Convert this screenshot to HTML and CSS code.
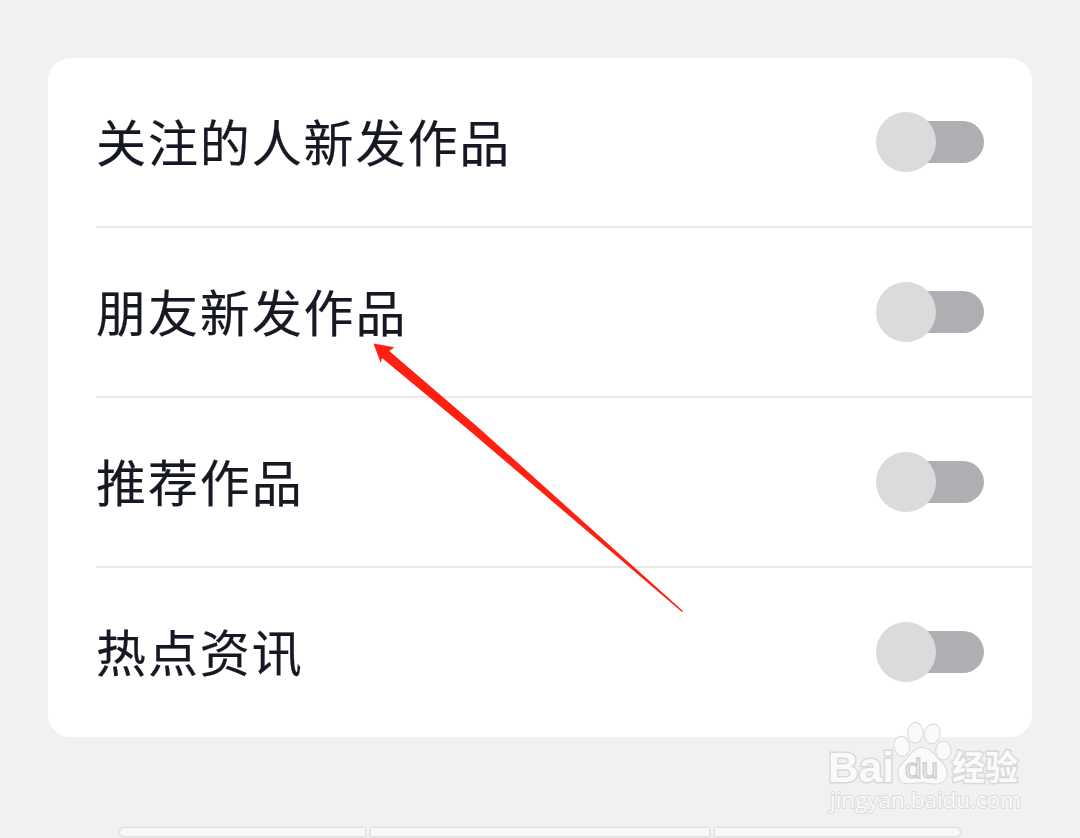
FILE: index.html
```html
<!DOCTYPE html>
<html lang="zh-CN">
<head>
    <meta charset="UTF-8">
    <meta name="viewport" content="width=device-width, initial-scale=1.0">
    <title>通知设置</title>
    <link rel="stylesheet" href="styles.css">
</head>
<body>
    <div class="settings">
        <div class="row">
            <span class="label">关注的人新发作品</span>
            <span class="switch"><span class="knob"></span></span>
        </div>
        <div class="row">
            <span class="label">朋友新发作品</span>
            <span class="switch"><span class="knob"></span></span>
        </div>
        <div class="row">
            <span class="label">推荐作品</span>
            <span class="switch"><span class="knob"></span></span>
        </div>
        <div class="row">
            <span class="label">热点资讯</span>
            <span class="switch"><span class="knob"></span></span>
        </div>
    </div>

    <div class="bars">
        <span class="bar bar-first"></span>
        <span class="bar bar-middle"></span>
        <span class="bar bar-last"></span>
    </div>

    <!-- Pointer to the second row -->
    <svg class="arrow" width="310" height="270" viewBox="373 343 310 270">
        <polygon points="373.5,343.5 394.3,347.3 389.3,350.9 480,429 683,611 682,612 467.5,429 382,357.9 380.8,363" fill="#ff2012"/>
    </svg>

    <!-- Watermark -->
    <svg class="watermark" width="210" height="100" viewBox="820 716 210 100">
        <g class="paw">
            <ellipse cx="901.7" cy="746.3" rx="7.3" ry="9.5" transform="rotate(-8 901.7 746.3)"/>
            <ellipse cx="915.4" cy="732.8" rx="7.2" ry="9.8"/>
            <ellipse cx="932.3" cy="733.8" rx="7.3" ry="9.5" transform="rotate(14 932.3 733.8)"/>
            <ellipse cx="943.4" cy="750.6" rx="7.2" ry="9"/>
            <path d="M922 748C930 748 934 755 939 760C945 765 948 771 946 777C944 784 936 784 930 783C924 782 919 782 913 783C906 784 900 783 899 776C897 769 901 765 906 760C911 755 914 748 922 748Z"/>
        </g>
        <g class="brand">
            <text x="828" y="782" font-size="43" textLength="66" lengthAdjust="spacingAndGlyphs">Bai</text>
            <text class="cjk" x="952" y="780" font-size="34" textLength="66" lengthAdjust="spacingAndGlyphs">经验</text>
        </g>
        <text class="du" x="905" y="778" font-size="28" textLength="33" lengthAdjust="spacingAndGlyphs">du</text>
        <text class="url" x="830" y="808" font-size="22" textLength="191" lengthAdjust="spacingAndGlyphs">jingyan.baidu.com</text>
    </svg>
</body>
</html>
```
FILE: styles.css
```css
* {
    box-sizing: border-box;
}
body {
    margin: 0;
    padding: 58px 48px 0;
    height: 838px;
    overflow: hidden;
    position: relative;
    background: #f1f1f1;
    font-family: "Noto Sans CJK SC", sans-serif;
}
.settings {
    height: 679px;
    background: #fff;
    border-radius: 22px;
    padding-left: 48px;
    overflow: hidden;
}
.row {
    height: 170px;
    display: flex;
    align-items: center;
    justify-content: space-between;
    padding-right: 48px;
    border-bottom: 2px solid #e8e8e9;
}
.row:last-child {
    border-bottom: none;
    padding-bottom: 2px;
}
.label {
    font-size: 50px;
    letter-spacing: 1.9px;
    line-height: 76px;
    padding-bottom: 4px;
    color: #161823;
    -webkit-text-stroke: 0.2px #161823;
}
.switch {
    width: 108px;
    height: 42px;
    border-radius: 21px;
    background: linear-gradient(to right, transparent 30px, #afafb3 30px);
    display: flex;
    align-items: center;
}
.knob {
    width: 60px;
    height: 60px;
    flex: none;
    border-radius: 50%;
    background: #dbdbdc;
}
.bars {
    display: flex;
    gap: 4px;
    margin-top: 90px;
    padding-left: 71px;
}
.bar {
    height: 10px;
    background: #f8f8f8;
    border: 1px solid #e0e0e0;
    box-shadow: 0 0 2px #dedede;
}
.bar-first {
    width: 247px;
    border-radius: 5px 0 0 5px;
}
.bar-middle {
    width: 340px;
}
.bar-last {
    width: 247px;
    border-radius: 0 5px 5px 0;
}
.arrow {
    position: absolute;
    left: 373px;
    top: 343px;
}
.watermark {
    position: absolute;
    left: 820px;
    top: 716px;
}
.paw,
.brand {
    fill: #fafafa;
    stroke: #d9d9d9;
    stroke-width: 2;
    paint-order: stroke;
}
.brand {
    font-family: "Liberation Sans", Arial, sans-serif;
    font-weight: bold;
    stroke-width: 3;
}
.cjk {
    font-family: "Noto Sans CJK SC", sans-serif;
}
.du {
    font-family: "Liberation Sans", Arial, sans-serif;
    fill: #fafafa;
    stroke: #cfcfcf;
    stroke-width: 1.5;
}
.url {
    font-family: "Open Sans", sans-serif;
    fill: #fafafa;
    stroke: #dcdcdc;
    stroke-width: 2;
    paint-order: stroke;
}
```
